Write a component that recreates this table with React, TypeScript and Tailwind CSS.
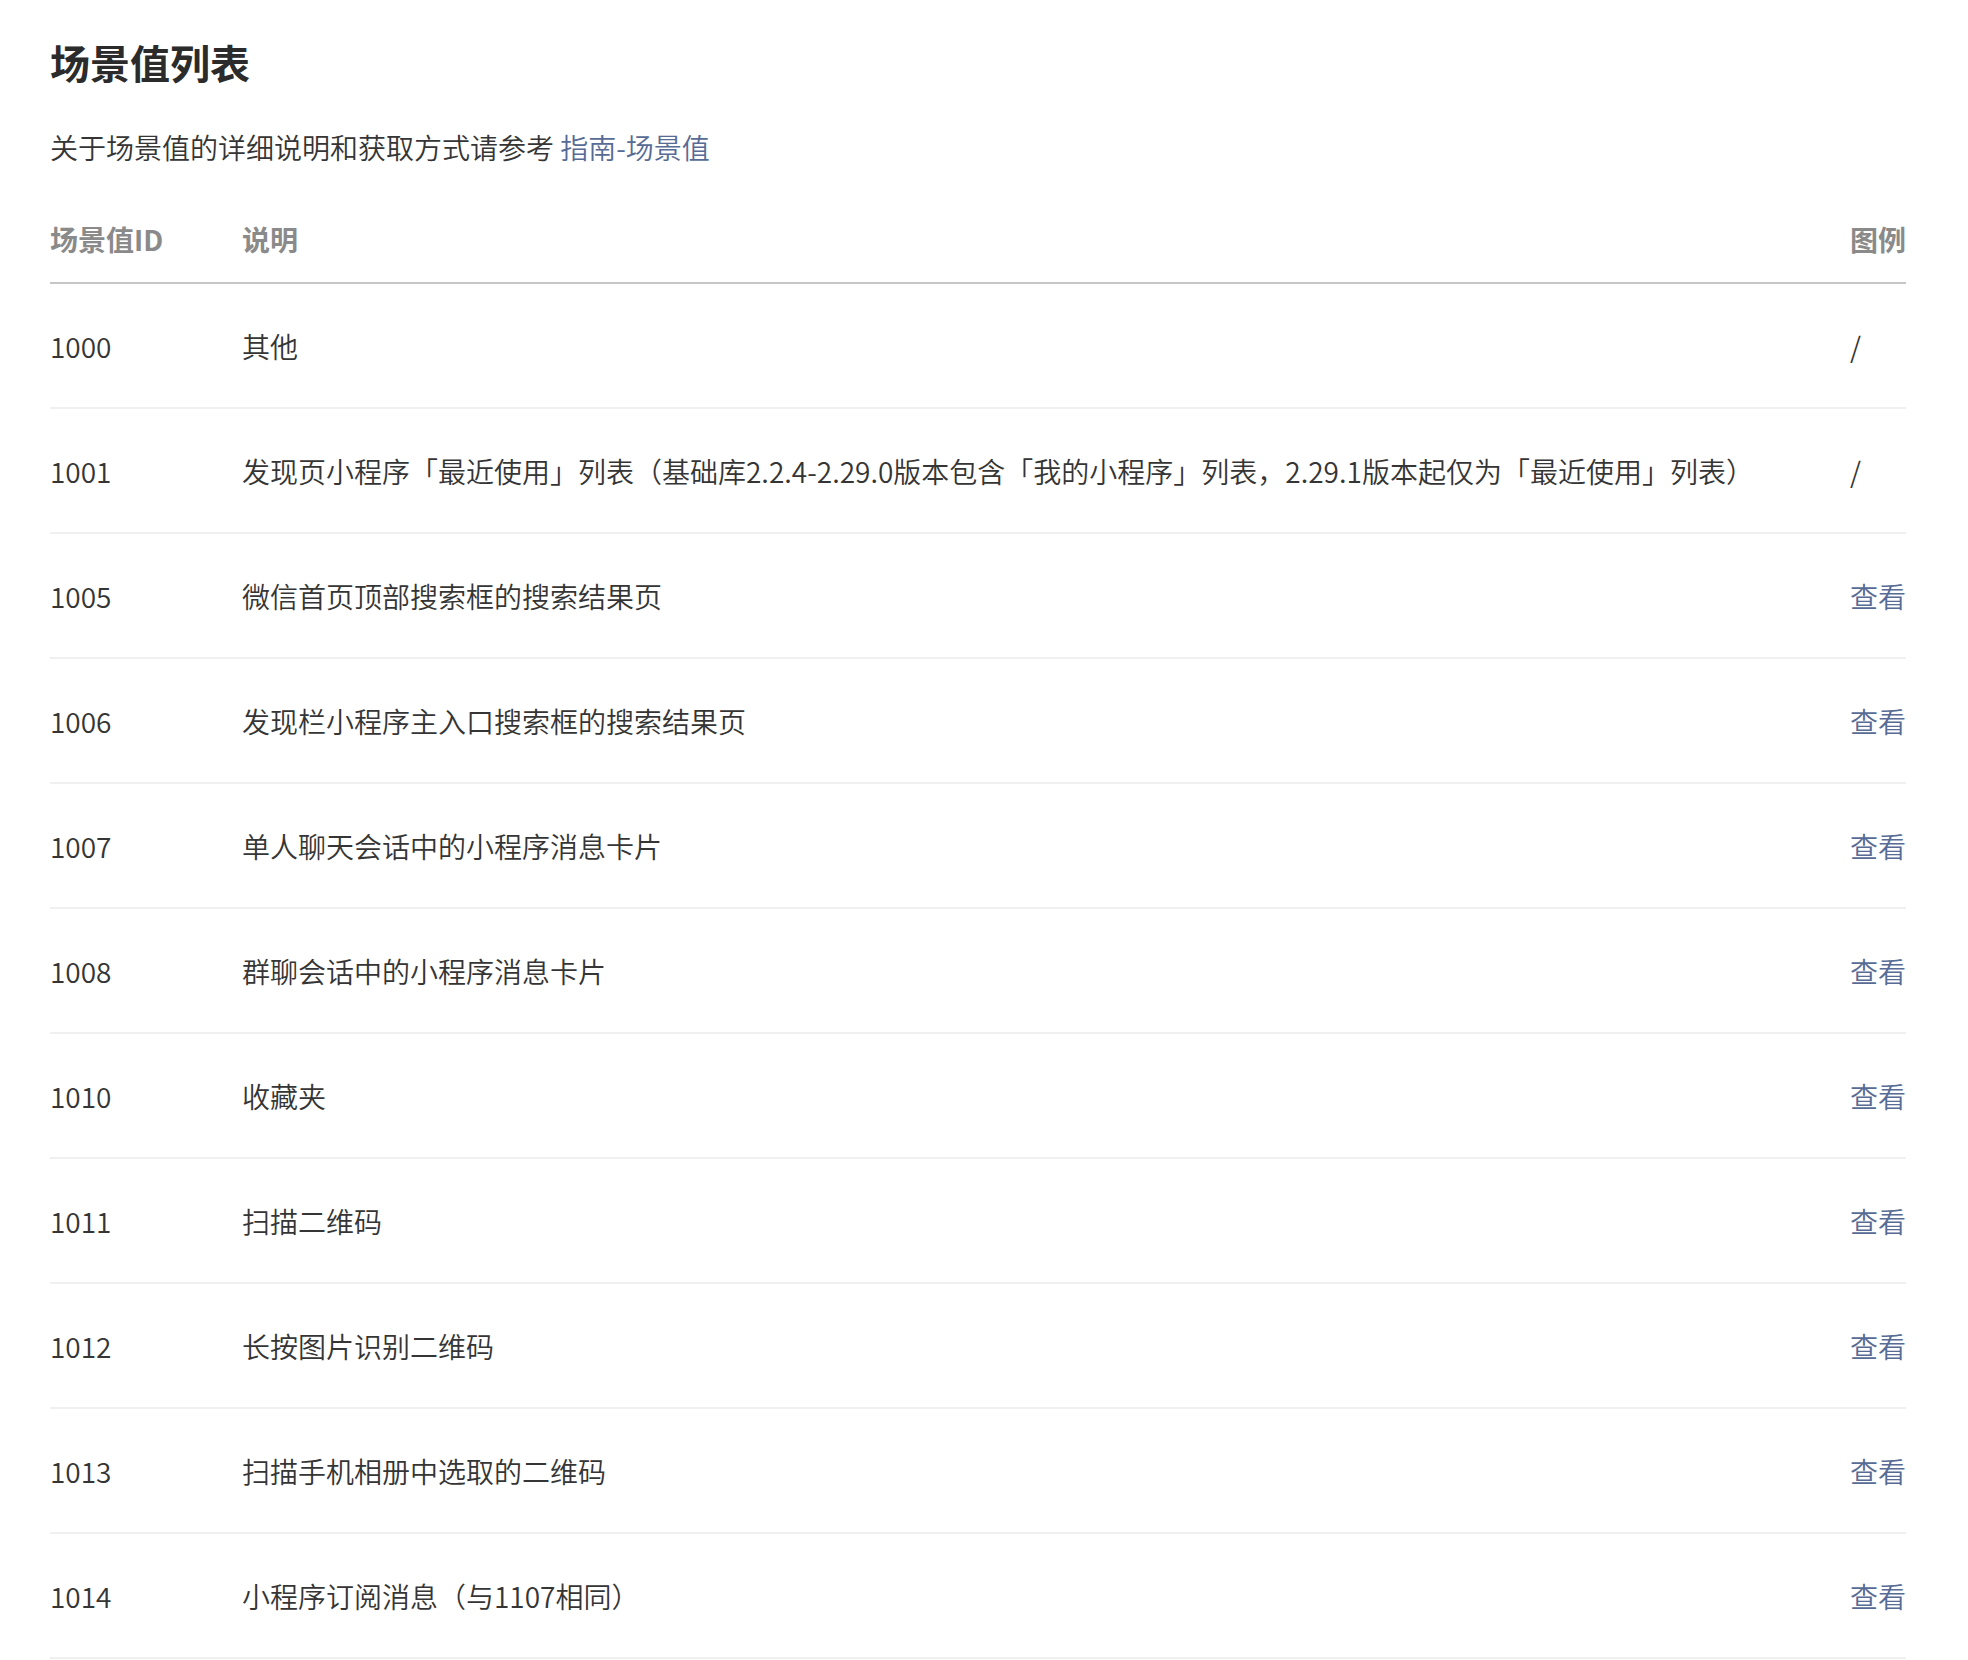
import React from "react";

interface Scene {
  id: string;
  desc: string;
  demo: boolean;
}

const scenes: Scene[] = [
  { id: "1000", desc: "其他", demo: false },
  {
    id: "1001",
    desc: "发现页小程序「最近使用」列表（基础库2.2.4-2.29.0版本包含「我的小程序」列表，2.29.1版本起仅为「最近使用」列表）",
    demo: false,
  },
  { id: "1005", desc: "微信首页顶部搜索框的搜索结果页", demo: true },
  { id: "1006", desc: "发现栏小程序主入口搜索框的搜索结果页", demo: true },
  { id: "1007", desc: "单人聊天会话中的小程序消息卡片", demo: true },
  { id: "1008", desc: "群聊会话中的小程序消息卡片", demo: true },
  { id: "1010", desc: "收藏夹", demo: true },
  { id: "1011", desc: "扫描二维码", demo: true },
  { id: "1012", desc: "长按图片识别二维码", demo: true },
  { id: "1013", desc: "扫描手机相册中选取的二维码", demo: true },
  { id: "1014", desc: "小程序订阅消息（与1107相同）", demo: true },
];

export default function App() {
  return (
    <div className="min-h-[1660px] bg-white text-[#353535] [font-family:'Noto_Sans_CJK_SC',sans-serif]">
      <div className="ml-[50px] w-[1856px] pt-[34px]">
        <h1 className="text-[40px] leading-[56px] font-bold text-[#2b2b2b]">场景值列表</h1>
        <p className="mt-[33px] text-[28px] leading-[48px] font-[350]">
          关于场景值的详细说明和获取方式请参考{" "}
          <a href="#" className="text-[#576b95]">
            指南-场景值
          </a>
        </p>

        <div className="mt-[29px]">
          <div className="grid h-[84px] grid-cols-[192px_1fr_56px] items-center border-b-2 border-[#c6c6c6] pb-[4px] text-[28px] font-semibold text-[#8a8a8a]">
            <span>场景值ID</span>
            <span>说明</span>
            <span>图例</span>
          </div>
          {scenes.map((s) => (
            <div
              key={s.id}
              className="grid h-[125px] grid-cols-[192px_1fr_56px] items-center border-b-2 border-[#f0f0f0] text-[28px] font-[350]"
            >
              <span>{s.id}</span>
              <span className="whitespace-nowrap">{s.desc}</span>
              {s.demo ? (
                <a href="#" className="text-[#576b95]">
                  查看
                </a>
              ) : (
                <span>/</span>
              )}
            </div>
          ))}
        </div>
      </div>
    </div>
  );
}
